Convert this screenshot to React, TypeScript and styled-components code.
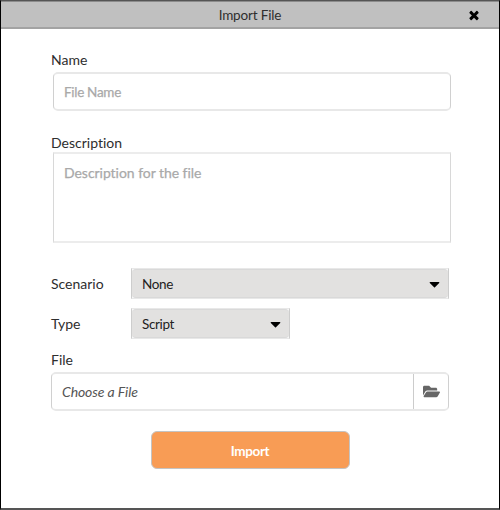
import React from "react";
import styled, { createGlobalStyle, css } from "styled-components";
import { FaFolderOpen } from "react-icons/fa";

const GlobalStyle = createGlobalStyle`
  * { box-sizing: border-box; }
  body { margin: 0; background: #fff; }
  input, textarea, button { font: inherit; margin: 0; outline: none; }
`;

const Dialog = styled.main`
  width: 500px;
  height: 510px;
  display: flex;
  flex-direction: column;
  border: 1px solid #000;
  border-top-color: #555;
  border-bottom: 2px solid #555;
  background: #fff;
  color: #2e2e2e;
  font: 14px/20px Lato, sans-serif;
  font-variant-ligatures: none;
`;

const TitleBar = styled.header`
  height: 28px;
  flex: none;
  display: grid;
  grid-template-columns: 48px 1fr 48px;
  align-items: center;
  background: #c0c0c0;
  border-top: 1px solid #8c8c8c;
  border-bottom: 2px solid #a3a3a3;
`;

const Title = styled.h1`
  grid-column: 2;
  margin: 0;
  font: inherit;
  font-size: 13.5px;
  letter-spacing: -0.15px;
  text-align: center;
`;

const CloseButton = styled.button`
  display: flex;
  justify-content: center;
  padding: 0 2px 0 0;
  border: 0;
  background: none;
  color: #000;
`;

const Form = styled.form`
  display: flex;
  flex-direction: column;
  padding: 21px 50px 0;
`;

const Label = styled.label`
  display: block;
  height: 20px;
`;

const FileLabel = styled.span`
  height: 20px;
  margin-top: 2px;
`;

const fieldFrame = css`
  border: solid;
  border-width: 2px 1px;
  border-color: #e8e8e8 #d0d0d0;
  background: #fff;
`;

const NameInput = styled.input`
  && { font-size: 13.5px; }
  ${fieldFrame}
  width: 398px;
  height: 39px;
  margin: 2px 0 22px 2px;
  border-radius: 5px;
  padding: 1px 10px 0;
  letter-spacing: -0.3px;
  &::placeholder { color: #a9a9a9; opacity: 1; -webkit-text-stroke: 0.25px #a9a9a9; }
`;

const DescriptionInput = styled.textarea`
  ${fieldFrame}
  display: block;
  width: 398px;
  height: 91px;
  margin: -1px 0 25px 2px;
  border-color: #ececec #d8d8d8;
  padding: 9px 10px;
  resize: none;
  letter-spacing: -0.04px;
  font-variant-ligatures: none;
  &::placeholder { color: #a9a9a9; opacity: 1; -webkit-text-stroke: 0.25px #a9a9a9; }
`;

const SelectRow = styled.div`
  display: grid;
  grid-template-columns: 80px auto;
  justify-content: start;
  align-items: center;
  height: 31px;
  margin-bottom: 9px;
`;

const SelectBox = styled.div<{ $width: number }>`
  width: ${(p) => p.$width}px;
  height: 31px;
  border: solid;
  border-width: 1px;
  border-color: #e8e8e8 #cdcdcd;
  background: #f7f7f7;
`;

const SelectFace = styled.div`
  height: 29px;
  display: flex;
  align-items: center;
  justify-content: space-between;
  padding: 1px 5px 0 10px;
  border: solid #d9d9d9;
  border-width: 1px 0;
  border-radius: 4px;
  background: #e2e1e0;
  color: #222;
  font-size: 13.5px;
  letter-spacing: -0.35px;
`;

const FilePicker = styled.div`
  ${fieldFrame}
  display: grid;
  grid-template-columns: 1fr 35px;
  width: 398px;
  height: 39px;
  margin-top: 2px;
  border-radius: 5px;
`;

const FileName = styled.span`
  display: flex;
  align-items: center;
  padding: 1px 10px 0;
  font-style: italic;
  letter-spacing: -0.1px;
  color: #555;
`;

const BrowseButton = styled.button`
  display: flex;
  align-items: center;
  justify-content: center;
  padding: 0;
  border: 0;
  border-left: 1px solid #ccc;
  background: none;
  color: #666;
`;

const ImportButton = styled.button`
  && { font-size: 13.5px; }
  align-self: center;
  width: 199px;
  height: 38px;
  margin: 20px 0 0 1px;
  padding: 1px 1px 0 0;
  border: 1px solid #c4c4c4;
  border-radius: 6px;
  background: #f89c55;
  color: #fff;
  font-weight: 700;
  letter-spacing: -0.35px;
`;

const CaretDown = () => (
  <svg width="17" height="17" viewBox="0 0 1792 1792" fill="#000">
    <path d="M1408 704q0 26-19 45l-448 448q-19 19-45 19t-45-19l-448-448q-19-19-19-45t19-45 45-19h896q26 0 45 19t19 45z" />
  </svg>
);

const Cross = () => (
  <svg width="14" height="14" viewBox="0 0 1792 1792" fill="currentColor">
    <path d="M1490 1322q0 40-28 68l-136 136q-28 28-68 28t-68-28l-294-294-294 294q-28 28-68 28t-68-28l-136-136q-28-28-28-68t28-68l294-294-294-294q-28-28-28-68t28-68l136-136q28-28 68-28t68 28l294 294 294-294q28-28 68-28t68 28l136 136q28 28 28 68t-28 68l-294 294 294 294q28 28 28 68z" />
  </svg>
);

const Select = ({ label, value, width }: { label: string; value: string; width: number }) => (
  <SelectRow>
    <span>{label}</span>
    <SelectBox $width={width} role="combobox" aria-label={label} aria-expanded={false}>
      <SelectFace>
        {value}
        <CaretDown />
      </SelectFace>
    </SelectBox>
  </SelectRow>
);

export default function App() {
  return (
    <>
      <GlobalStyle />
      <Dialog>
        <TitleBar>
          <Title>Import File</Title>
          <CloseButton type="button" aria-label="Close">
            <Cross />
          </CloseButton>
        </TitleBar>
        <Form onSubmit={(e) => e.preventDefault()}>
          <Label htmlFor="name">Name</Label>
          <NameInput id="name" placeholder="File Name" />
          <Label htmlFor="description">Description</Label>
          <DescriptionInput id="description" placeholder="Description for the file" />
          <Select label="Scenario" value="None" width={318} />
          <Select label="Type" value="Script" width={159} />
          <FileLabel>File</FileLabel>
          <FilePicker>
            <FileName>Choose a File</FileName>
            <BrowseButton type="button" aria-label="Browse">
              <FaFolderOpen size={17} />
            </BrowseButton>
          </FilePicker>
          <ImportButton type="submit">Import</ImportButton>
        </Form>
      </Dialog>
    </>
  );
}
